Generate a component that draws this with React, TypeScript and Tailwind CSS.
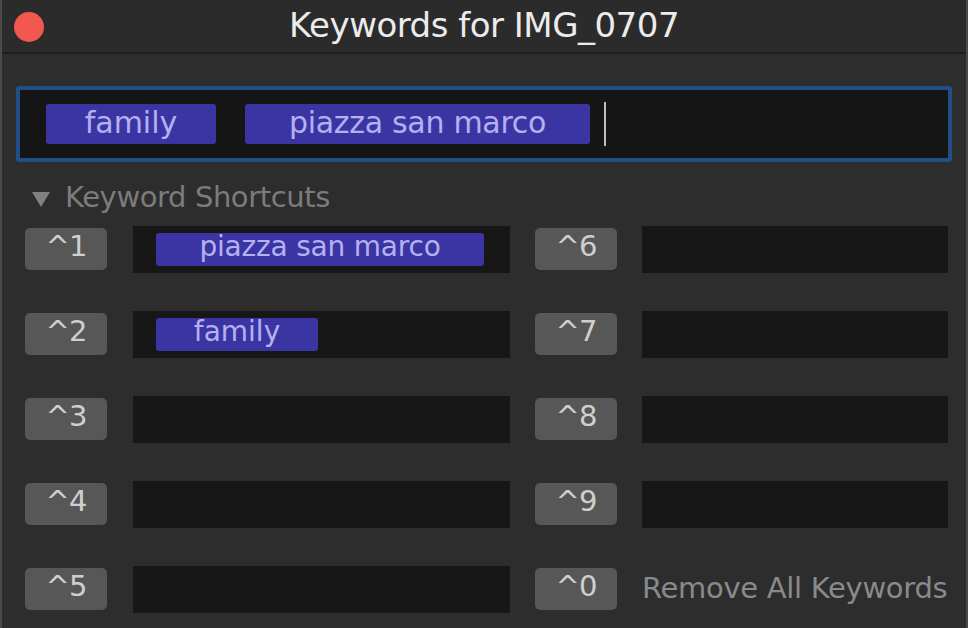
import React from "react";

const Tag = ({ label, className = "" }: { label: string; className?: string }) => (
  <div
    className={`flex items-center justify-center rounded-[3px] bg-[#3b35a3] text-[#b4b0f2] ${className}`}
  >
    {label}
  </div>
);

const Key = ({ n }: { n: string }) => (
  <div className="flex h-[42px] w-[82px] items-center justify-center rounded-[5px] bg-[#575757] pb-1 text-[29px] tracking-[-1px] text-[#cfcfcf]">
    ^{n}
  </div>
);

const Field = ({ children, w }: { children?: React.ReactNode; w: string }) => (
  <div className={`flex h-[47px] items-center bg-[#171717] pl-[23px] ${w}`}>{children}</div>
);

const App: React.FC = () => {
  return (
    <div
      className="flex h-[628px] w-[968px] flex-col overflow-hidden border-x-2 border-[#4a4a4a] bg-[#2d2d2d]"
      style={{ fontFamily: "'DejaVu Sans', 'Liberation Sans', sans-serif" }}
    >
      {/* title bar */}
      <div className="relative flex h-[54px] shrink-0 items-center justify-center border-b-2 border-[#1f1f1f] bg-[#2b2b2b]">
        <div className="absolute left-[12px] top-[12px] h-[30px] w-[30px] rounded-full bg-[#f2584f]" />
        <div className="pb-[2px] text-[34px] tracking-[-0.5px] text-[#ececec]">Keywords for IMG_0707</div>
      </div>

      <div className="flex flex-col px-[14px] pt-[32px]">
        {/* keyword field */}
        <div className="flex h-[76px] items-center rounded-[3px] border-[4px] border-[#1f4f86] bg-[#151515] pl-[26px]">
          <Tag label="family" className="h-[40px] w-[170px] pb-1 text-[30px]" />
          <Tag label="piazza san marco" className="ml-[29px] h-[40px] w-[345px] pb-1 text-[30px] tracking-[-0.3px]" />
          <div className="ml-[14px] h-[44px] w-[2px] bg-[#bdbdbd]" />
        </div>

        {/* shortcuts */}
        <div className="mt-[14px] flex items-center gap-[14px] pl-[15px] text-[29px] text-[#7c7c7c]">
          <svg width="20" height="18" viewBox="0 0 20 18" className="mt-[2px]">
            <path d="M1 2 H19 L10 17 Z" fill="#808080" />
          </svg>
          <span className="tracking-[-0.4px]">Keyword Shortcuts</span>
        </div>

        <div className="mt-[6px] flex flex-col gap-[38px] pl-[9px]">
          {[1, 2, 3, 4, 5].map((i) => (
            <div key={i} className="flex items-center">
              <Key n={String(i)} />
              <div className="ml-[26px]">
                <Field w="w-[377px]">
                  {i === 1 && (
                    <Tag label="piazza san marco" className="h-[33px] w-[328px] pb-1 text-[28px] tracking-[-0.2px]" />
                  )}
                  {i === 2 && <Tag label="family" className="h-[33px] w-[162px] pb-1 text-[28px]" />}
                </Field>
              </div>
              <div className="ml-[25px]">
                <Key n={i === 5 ? "0" : String(i + 5)} />
              </div>
              <div className="ml-[25px]">
                {i === 5 ? (
                  <div className="flex h-[47px] items-center whitespace-nowrap text-[29px] tracking-[-0.3px] text-[#8a8a8a]">
                    Remove All Keywords
                  </div>
                ) : (
                  <Field w="w-[306px]" />
                )}
              </div>
            </div>
          ))}
        </div>
      </div>
    </div>
  );
};

export default App;
